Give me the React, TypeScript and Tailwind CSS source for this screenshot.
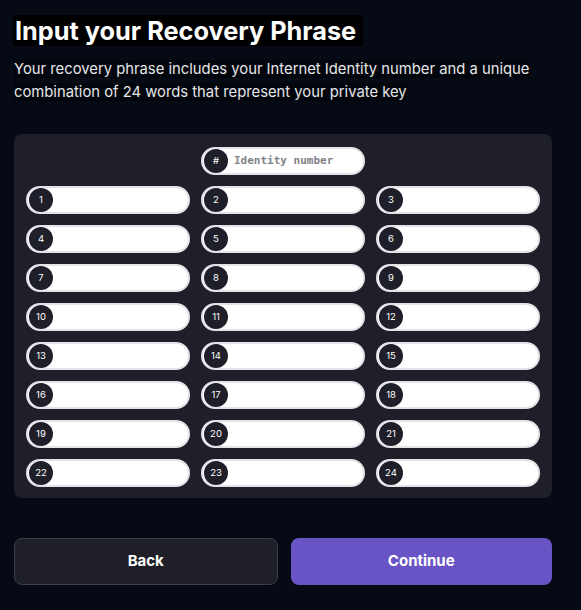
import { useState } from 'react';

const sans = { fontFamily: 'Inter, "Noto Sans", sans-serif' };
const mono = { fontFamily: '"DejaVu Sans Mono", "Liberation Mono", monospace' };

function WordInput({ label, placeholder }: { label: string; placeholder?: string }) {
    const [value, setValue] = useState('');
    return (
        <label className="flex items-center h-[28px] rounded-full bg-white border-2 border-[#e4e4e8] pl-px pr-3">
            <span
                className="flex items-center justify-center w-[24px] h-[24px] shrink-0 rounded-full bg-[#1e1f28] text-white text-[9.5px]"
                style={sans}
            >
                {label}
            </span>
            <input
                value={value}
                onChange={(e) => setValue(e.target.value)}
                placeholder={placeholder}
                className="ml-[6px] w-full bg-transparent outline-none text-[11px] font-semibold text-[#1e1f28] placeholder:text-[#828288]"
                style={mono}
            />
        </label>
    );
}

export default function App() {
    const words = Array.from({ length: 24 }, (_, i) => String(i + 1));

    return (
        <div className="w-[581px] h-[610px] bg-[#050a14] pl-[14px] pt-[14px] text-white" style={sans}>
            <div className="w-[538px]">
                {/* Heading */}
                <h1 className="text-[25.3px] font-bold leading-[33px] -ml-px">
                    <span className="bg-black pl-[2px] pr-[7px]">Input your Recovery Phrase</span>
                </h1>
                <p className="mt-[11px] text-[14.8px] leading-[23px] text-[#e6e7ea]">
                    <span className="bg-[#02050c]">
                        Your recovery phrase includes your Internet Identity number and a unique combination of 24 words that represent your private key
                    </span>
                </p>

                {/* Word grid */}
                <div className="mt-[30px] rounded-lg bg-[#1e1f28] px-[12px] pt-[13px] pb-[11px]">
                    <div className="grid grid-cols-3 gap-x-[11px] gap-y-[11px]">
                        <div />
                        <WordInput label="#" placeholder="Identity number" />
                        <div />
                        {words.map((w) => (
                            <WordInput key={w} label={w} />
                        ))}
                    </div>
                </div>

                {/* Actions */}
                <div className="mt-[40px] flex gap-[13px]">
                    <button className="flex-1 h-[47px] rounded-lg bg-[#1e1f28] border border-[#3b3d48] text-[15px] font-bold text-white">
                        Back
                    </button>
                    <button className="flex-1 h-[47px] rounded-lg bg-[#6854c4] text-[15px] font-bold text-white">
                        Continue
                    </button>
                </div>
            </div>
        </div>
    );
}
